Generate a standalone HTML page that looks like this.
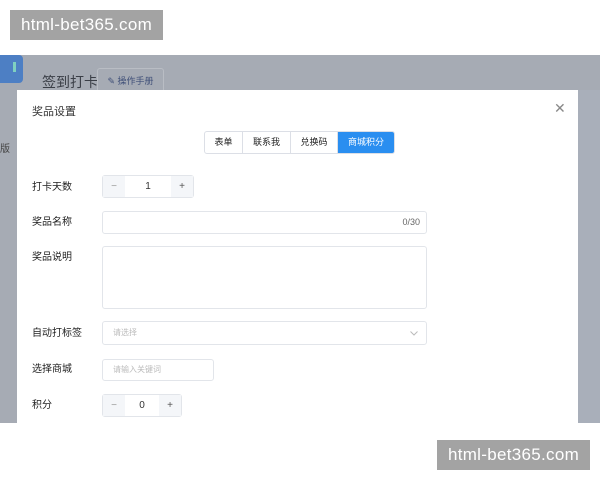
<!DOCTYPE html>
<html><head><meta charset="utf-8"><style>
*{box-sizing:border-box;margin:0;padding:0}
body{width:600px;height:480px;background:#fff;position:relative;overflow:hidden;font-family:"Liberation Sans","Noto Sans CJK SC",sans-serif;}
.lab{position:absolute;background:#a3a3a3;color:#fff;font-size:17px;line-height:30px;text-align:center;letter-spacing:0.3px}
.shot{position:absolute;left:0;top:55px;width:600px;height:368px;background:#a6abb4;overflow:hidden}
.side{position:absolute;left:0;top:0;width:23px;height:28px;background:#4d7fc4;border-radius:0 4px 4px 0}
.side i{position:absolute;left:13px;top:7px;width:3px;height:10px;background:#7fd0c0}
.ttl{position:absolute;left:42px;top:17px;font-size:14px;color:#3a3e46}
.mbtn{position:absolute;left:97px;top:13px;width:67px;height:27px;border:1px solid #b9bdc4;border-radius:3px;font-size:9px;color:#3f4f78;line-height:25px;text-align:center}
.dlg{position:absolute;left:17px;top:35px;width:561px;height:340px;background:#fff}
.dlg .h{position:absolute;left:15px;top:13px;font-size:11px;color:#333}
.x{position:absolute;left:537px;top:10px;font-size:14px;color:#888}
.tabs{position:absolute;left:187px;top:41px;height:23px;display:flex;border:1px solid #dcdfe6;border-radius:3px;overflow:hidden;font-size:9px;color:#222}
.tabs div{line-height:21px;text-align:center;border-right:1px solid #dcdfe6}
.tabs .a{background:#2a8ef0;color:#fff;border:none}
.fl{position:absolute;left:15px;font-size:10px;color:#222}
.num{position:absolute;left:85px;width:92px;height:23px;border:1px solid #e2e5ea;border-radius:3px;display:flex;font-size:10px;color:#333}
.num span{width:22px;background:#f4f6f9;text-align:center;line-height:21px;color:#999}
.num span.p{color:#555}
.num b{flex:1;font-weight:normal;text-align:center;line-height:21px}
.inp{position:absolute;left:85px;border:1px solid #e2e5ea;border-radius:3px;font-size:8px;color:#bbb;padding-left:10px}
</style></head><body>
<div class="lab" style="left:10px;top:10px;width:153px;height:30px">html-bet365.com</div>
<div class="shot">
 <div class="side"><i></i></div>
 <div class="ttl">签到打卡</div>
 <div class="mbtn">✎ 操作手册</div>
 <div style="position:absolute;left:0;top:85px;font-size:10px;color:#444">版</div>
 <div class="dlg">
  <div class="h">奖品设置</div>
  <div class="x">✕</div>
  <div class="tabs"><div style="width:38px">表单</div><div style="width:48px">联系我</div><div style="width:47px">兑换码</div><div class="a" style="width:56px">商城积分</div></div>
  <div class="fl" style="top:88px">打卡天数</div>
  <div class="num" style="top:85px"><span>−</span><b>1</b><span class="p">+</span></div>
  <div class="fl" style="top:123px">奖品名称</div>
  <div class="inp" style="top:121px;width:325px;height:23px"><span style="position:absolute;right:6px;top:5px;font-size:9px;color:#666">0/30</span></div>
  <div class="fl" style="top:158px">奖品说明</div>
  <div class="inp" style="top:156px;width:325px;height:63px"></div>
  <div class="fl" style="top:234px">自动打标签</div>
  <div class="inp" style="top:231px;width:325px;height:24px;line-height:22px">请选择<svg style="position:absolute;right:8px;top:9px" width="8" height="5" viewBox="0 0 8 5"><path d="M0.5 0.5L4 4L7.5 0.5" fill="none" stroke="#bbb" stroke-width="1"/></svg></div>
  <div class="fl" style="top:270px">选择商城</div>
  <div class="inp" style="top:269px;width:112px;height:22px;line-height:20px">请输入关键词</div>
  <div class="fl" style="top:306px">积分</div>
  <div class="num" style="top:304px;width:80px"><span>−</span><b>0</b><span class="p">+</span></div>
 </div>
 <div style="position:absolute;left:578px;top:35px;width:22px;height:340px;background:#a9afba"></div>
</div>
<div class="lab" style="left:437px;top:440px;width:153px;height:30px">html-bet365.com</div>
</body></html>
